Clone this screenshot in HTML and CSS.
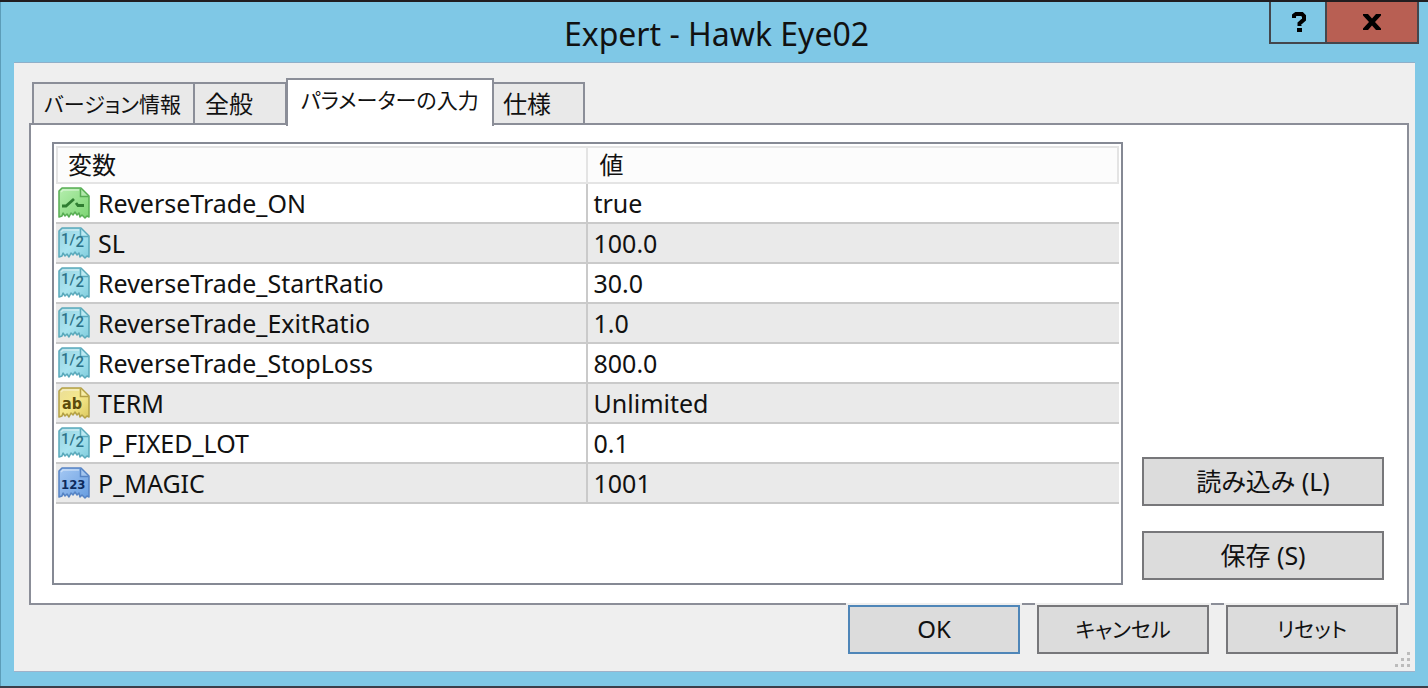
FILE: index.html
```html
<!DOCTYPE html>
<html lang="ja">
<head>
  <meta charset="UTF-8" />
  <meta name="viewport" content="width=device-width, initial-scale=1.0" />
  <title>Expert - Hawk Eye02</title>
  <link rel="stylesheet" href="styles.css">
</head>
<body>
  <!-- shared icon shapes -->
  <svg class="defs" width="0" height="0" aria-hidden="true">
    <symbol id="sheet" viewBox="0 0 32 32">
      <path d="M1 4 L4 1 H23 L31 9 V30 L29 29 L27 31 L24 28 L22 30 L21 26 L19 28 L17 25 L15 28 L13 26 L11 30 L9 27 L7 29 L5 26 L4 29 L1 30 Z" stroke-width="1.5" stroke-linejoin="round"/>
      <path d="M3 5 L5 3 H21" fill="none" stroke="#fff" stroke-opacity=".45" stroke-width="1.5"/>
      <path d="M22.500 2 V9.500 H30.500" fill="#fff" fill-opacity=".25" stroke-width="1.500"/>
    </symbol>
    <linearGradient id="gGreen" x2="1" y2="1"><stop offset="0" stop-color="#b5eeae"/><stop offset="1" stop-color="#7cd573"/></linearGradient>
    <linearGradient id="gCyan" x2="1" y2="1"><stop offset="0" stop-color="#9bd3e0"/><stop offset=".5" stop-color="#a9e4f0"/><stop offset="1" stop-color="#80cddd"/></linearGradient>
    <linearGradient id="gYellow" x2="1" y2="1"><stop offset="0" stop-color="#e9dd98"/><stop offset=".5" stop-color="#f5e88c"/><stop offset="1" stop-color="#dcc95e"/></linearGradient>
    <linearGradient id="gBlue" x2="1" y2="1"><stop offset="0" stop-color="#a5c8f3"/><stop offset="1" stop-color="#679de0"/></linearGradient>
    <symbol id="bool" viewBox="0 0 32 32">
      <use href="#sheet" fill="url(#gGreen)" stroke="#57ad53"/>
      <path d="M4 19 H8 L16 12 M18 16 L20 18.500 H26" fill="none" stroke="#2f7d31" stroke-width="2.800"/>
    </symbol>
    <symbol id="double" viewBox="0 0 32 32">
      <use href="#sheet" fill="url(#gCyan)" stroke="#5aa9bb"/>
      <text class="half" x="3" y="17" font-size="15" fill="#2c7388">1<tspan dy="1">/</tspan><tspan dy="2">2</tspan></text>
    </symbol>
    <symbol id="string" viewBox="0 0 32 32">
      <use href="#sheet" fill="url(#gYellow)" stroke="#b3a046"/>
      <text x="4" y="22" font-size="16" fill="#5c4b0c">ab</text>
    </symbol>
    <symbol id="int" viewBox="0 0 32 32">
      <use href="#sheet" fill="url(#gBlue)" stroke="#5583c4"/>
      <text x="3" y="22" font-size="13" fill="#0d2a5c">123</text>
    </symbol>
  </svg>

  <div class="window">
    <header class="titlebar">
      <h1 class="title">Expert - Hawk Eye02</h1>
      <div class="controls">
        <button class="help" aria-label="Help"><svg width="16" height="22" viewBox="0 0 16 22"><path d="M3 7 V4.500 L5 3 H11 L13 5 V8.500 L8.500 12.500 V15" fill="none" stroke="#000" stroke-width="4"/><path d="M6 17 H11 V21 H6 Z"/></svg></button>
        <button class="close" aria-label="Close"><svg width="20" height="18" viewBox="0 0 20 18"><path d="M1 1 H6 L10 5.500 L14 1 H19 V2.500 L13 9 L19 15.500 V17 H14 L10 12.500 L6 17 H1 V15.500 L7 9 L1 2.500 Z"/></svg></button>
      </div>
    </header>

    <main class="client">
      <div class="tabs" role="tablist">
        <button class="tab tab-info kana" role="tab">バージョン情報</button>
        <button class="tab" role="tab">全般</button>
        <button class="tab active kana" role="tab" aria-selected="true">パラメーターの入力</button>
        <button class="tab" role="tab">仕様</button>
      </div>

      <section class="panel" role="tabpanel">
        <div class="list">
          <table class="params">
            <thead>
              <tr><th>変数</th><th>値</th></tr>
            </thead>
            <tbody>
              <tr><td><div class="name"><svg class="icon"><use href="#bool"/></svg>ReverseTrade_ON</div></td><td>true</td></tr>
              <tr><td><div class="name"><svg class="icon"><use href="#double"/></svg>SL</div></td><td>100.0</td></tr>
              <tr><td><div class="name"><svg class="icon"><use href="#double"/></svg>ReverseTrade_StartRatio</div></td><td>30.0</td></tr>
              <tr><td><div class="name"><svg class="icon"><use href="#double"/></svg>ReverseTrade_ExitRatio</div></td><td>1.0</td></tr>
              <tr><td><div class="name"><svg class="icon"><use href="#double"/></svg>ReverseTrade_StopLoss</div></td><td>800.0</td></tr>
              <tr><td><div class="name"><svg class="icon"><use href="#string"/></svg>TERM</div></td><td>Unlimited</td></tr>
              <tr><td><div class="name"><svg class="icon"><use href="#double"/></svg>P_FIXED_LOT</div></td><td>0.1</td></tr>
              <tr><td><div class="name"><svg class="icon"><use href="#int"/></svg>P_MAGIC</div></td><td>1001</td></tr>
            </tbody>
          </table>
        </div>
        <div class="side">
          <button class="btn">読み込み (L)</button>
          <button class="btn">保存 (S)</button>
        </div>
      </section>

      <footer class="actions">
        <button class="btn ok">OK</button>
        <button class="btn kana">キャンセル</button>
        <button class="btn kana">リセット</button>
      </footer>

      <svg class="grip" width="16" height="16" viewBox="0 0 16 16" aria-hidden="true">
        <path d="M12 0h3v3h-3zM6 6h3v3h-3zM12 6h3v3h-3zM0 12h3v3h-3zM6 12h3v3h-3zM12 12h3v3h-3z" fill="#bcbcbc"/>
      </svg>
    </main>
  </div>
</body>
</html>
```
FILE: styles.css
```css
*{margin:0;padding:0;box-sizing:border-box;}
body{font-family:"Noto Sans","Noto Sans CJK JP",sans-serif;font-size:24px;line-height:32px;color:#111;}
button{font:inherit;color:inherit;font-feature-settings:"palt";}
.defs{position:absolute;}

.window{display:flex;flex-direction:column;min-height:100vh;padding:0 13px 14px 14px;background:#7fc8e6;border-top:2px solid #211d20;border-bottom:2px solid #3b3f4a;box-shadow:inset 1px 0 0 #5c9db8;}

.titlebar{display:grid;grid-template-columns:1fr auto 1fr;height:60px;margin-right:-4px;}
.title{grid-column:2;align-self:center;font-size:32px;font-weight:400;line-height:40px;padding-top:4px;}
.controls{display:flex;justify-self:end;height:42px;}
.controls button{display:flex;align-items:center;justify-content:center;border:2px solid #44464c;border-top:0;}
.controls .help{width:58px;padding-left:2px;}
.help{background:#7fc8e6;}
.controls .close{width:92px;background:#b85f53;border-left:0;}

.client{position:relative;flex:1;display:flex;flex-direction:column;padding:15px 6px 17px 15px;background:#efefef;border-top:1px solid #8fafc9;border-bottom:1px solid #9fb2c9;}

.tabs{display:flex;align-items:flex-end;height:45px;padding-left:3px;}
.tab{height:41px;min-width:92px;padding:0 10px;text-align:left;white-space:nowrap;background:#e9e9e9;border:2px solid #8b8e98;border-bottom:0;}
.tab + .tab{border-left:0;}
.tab-info{width:163px;}
.tabs .active{position:relative;z-index:1;width:208px;height:48px;margin:0 -1px -3px;padding:0 13px 6px;background:#fff;border-left:2px solid #8b8e98;}
.kana{font-size:21px;}

.panel{flex:1;display:flex;gap:19px;padding:17px 23px 18px 21px;background:#fff;border:2px solid #8b8e98;}
.list{flex:1;padding:2px;border:2px solid #858994;}
.params{width:100%;border-collapse:separate;border-spacing:0;table-layout:fixed;}
.params th{height:38px;padding:0 10px;font-weight:400;text-align:left;background:#fcfcfc;border:2px solid #e4e4e4;}
.params th + th{border-left:0;padding-left:12px;}
.params td{height:40px;padding:0 6px;font-size:25px;border-bottom:2px solid #cacaca;}
.params td:first-child{padding:0 2px;border-right:2px solid #cacaca;}
.params tbody tr:nth-child(even){background:#eaeaea;}
.name{display:flex;align-items:center;gap:8px;}
.icon{width:32px;height:32px;font-family:"DejaVu Sans Condensed",sans-serif;font-weight:700;}
.half{font-family:Roboto,sans-serif;font-weight:500;}

.side{display:flex;flex-direction:column;justify-content:flex-end;gap:25px;width:242px;padding-bottom:5px;}
.btn{height:49px;padding-bottom:2px;background:#dcdcdc;border:2px solid #77777a;}
.side .btn{font-size:25px;}

.actions{position:relative;display:flex;justify-content:flex-end;gap:17px;padding-right:11px;}
.actions .btn{width:172px;box-shadow:0 0 0 2px #efefef;}
.actions .ok{border-color:#4f86b8;}

.grip{position:absolute;right:4px;bottom:3px;}
```
